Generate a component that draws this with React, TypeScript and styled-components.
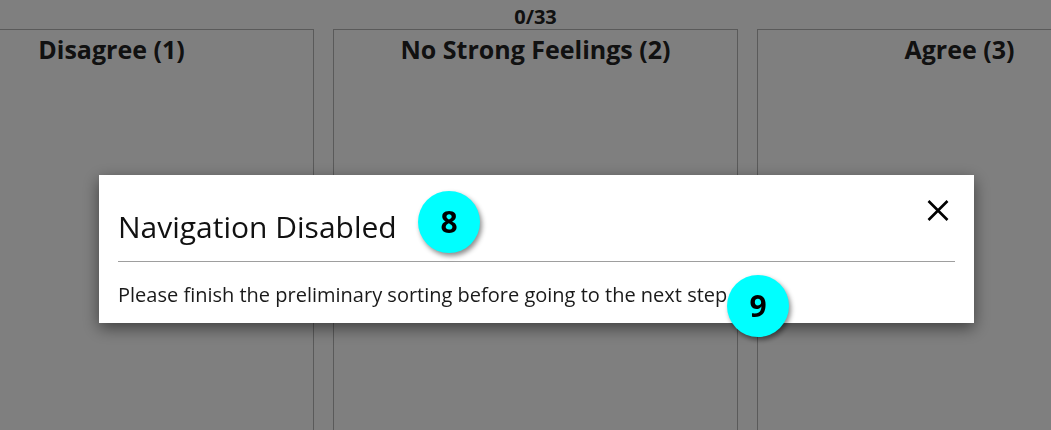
import React from "react";
import styled, { createGlobalStyle } from "styled-components";

const GlobalStyle = createGlobalStyle`
  html, body {
    margin: 0;
    padding: 0;
    background: #ffffff;
    overflow: hidden;
    font-family: "Open Sans", "DejaVu Sans", sans-serif;
  }
  * { box-sizing: border-box; }
`;

const Page = styled.div`
  width: 1051px;
  height: 430px;
  overflow: hidden;
  background: #ffffff;
`;

const Board = styled.div`
  width: 1253px;
  margin-left: -91px;
  padding-top: 5px;
  display: flex;
  flex-direction: column;
`;

const Counter = styled.div`
  height: 24px;
  line-height: 24px;
  font-size: 20px;
  font-weight: 700;
  color: #222;
  text-align: center;
`;

const Columns = styled.div`
  display: grid;
  grid-template-columns: repeat(3, 405px);
  column-gap: 19px;
`;

const Column = styled.div`
  height: 420px;
  border: 1px solid #b4b4b4;
  padding-top: 4px;
`;

const ColumnTitle = styled.div`
  font-size: 25px;
  line-height: 30px;
  font-weight: 700;
  color: #222;
  text-align: center;
`;

const Backdrop = styled.div`
  position: fixed;
  inset: 0;
  background: rgba(0, 0, 0, 0.5);
`;

const Modal = styled.div`
  position: fixed;
  left: 99px;
  top: 175px;
  width: 875px;
  height: 148px;
  background: #ffffff;
  box-shadow: 0 5px 15px rgba(0, 0, 0, 0.5);
  padding: 0 19px;
  display: flex;
  flex-direction: column;
`;

const Header = styled.div`
  display: flex;
  justify-content: space-between;
  align-items: flex-start;
  padding-top: 25px;
  padding-bottom: 16px;
  border-bottom: 1px solid #9e9e9e;
`;

const Title = styled.h4`
  margin: 9px 0 0 0;
  font-size: 30px;
  line-height: 36px;
  font-weight: 400;
  color: #111;
`;

const CloseButton = styled.button`
  border: none;
  background: none;
  padding: 0;
  margin: 0 6px 0 0;
  width: 22px;
  height: 21px;
  display: flex;
  cursor: pointer;
`;

const Body = styled.p`
  margin: 18px 0 0 0;
  font-size: 20px;
  line-height: 30px;
  color: #1a1a1a;
`;

const Badge = styled.div<{ $left: number; $top: number }>`
  position: absolute;
  left: ${(p) => p.$left}px;
  top: ${(p) => p.$top}px;
  width: 62px;
  height: 62px;
  border-radius: 50%;
  background: #00ffff;
  box-shadow: 2px 3px 5px rgba(0, 0, 0, 0.45);
  display: flex;
  align-items: center;
  justify-content: center;
  font-size: 30px;
  font-weight: 700;
  color: #000;
  line-height: 1;
`;

const columns = ["Disagree (1)", "No Strong Feelings (2)", "Agree (3)"];

export default function App() {
  return (
    <Page>
      <GlobalStyle />
      <Board>
        <Counter>0/33</Counter>
        <Columns>
          {columns.map((c) => (
            <Column key={c}>
              <ColumnTitle>{c}</ColumnTitle>
            </Column>
          ))}
        </Columns>
      </Board>
      <Backdrop />
      <Modal>
        <Header>
          <Title>Navigation Disabled</Title>
          <CloseButton aria-label="Close">
            <svg width="22" height="21" viewBox="0 0 22 21">
              <path
                d="M1.5 1 L20.5 20 M20.5 1 L1.5 20"
                stroke="#000"
                strokeWidth="2.6"
                fill="none"
              />
            </svg>
          </CloseButton>
        </Header>
        <Body>Please finish the preliminary sorting before going to the next step.</Body>
        <Badge $left={319} $top={16}>8</Badge>
        <Badge $left={628} $top={100}>9</Badge>
      </Modal>
    </Page>
  );
}
